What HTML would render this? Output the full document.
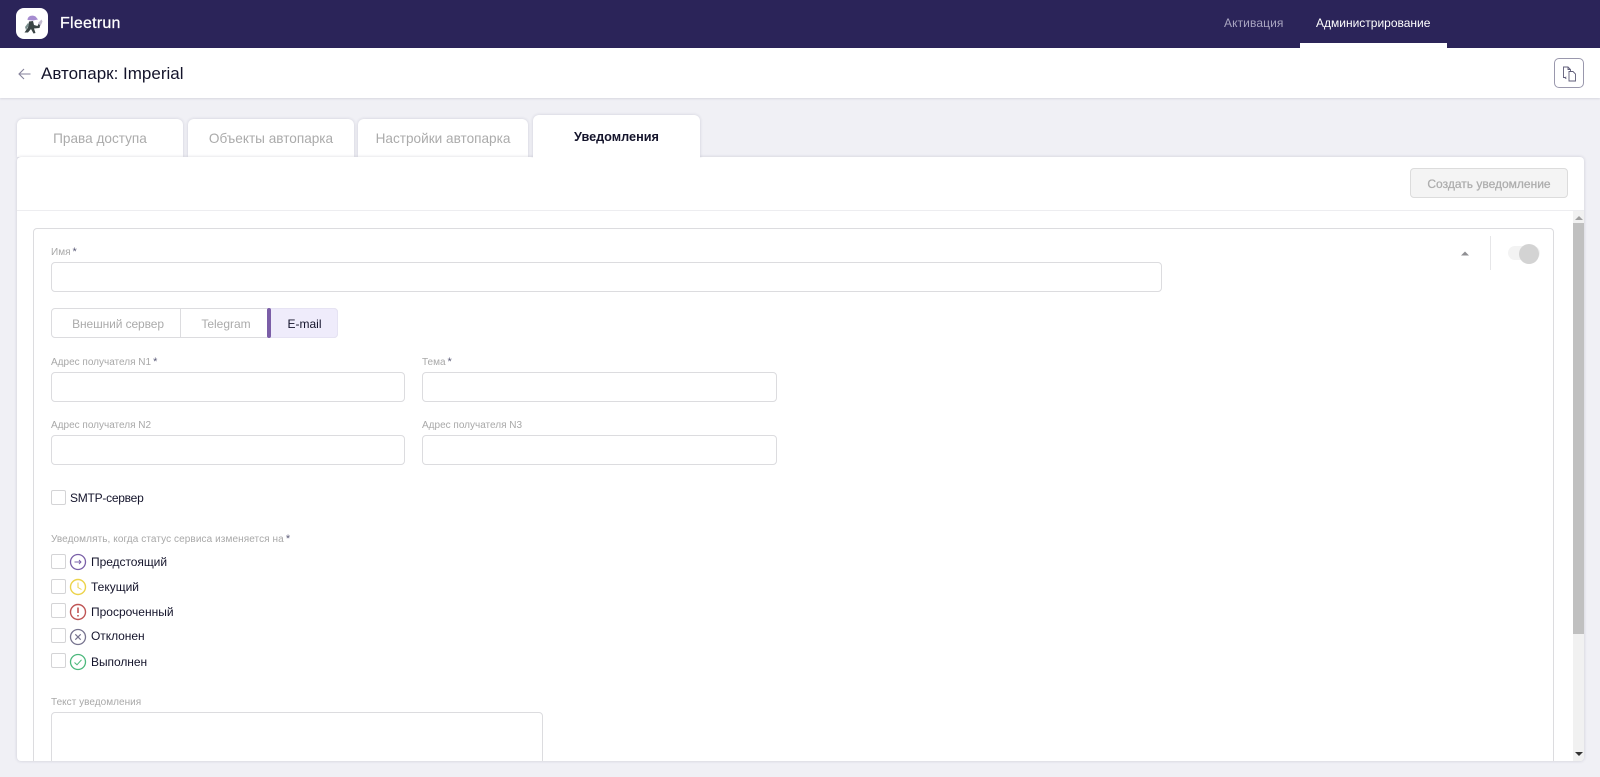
<!DOCTYPE html>
<html lang="ru"><head><meta charset="utf-8"><title>Fleetrun</title>
<style>
html,body{margin:0;padding:0}
body{width:1600px;height:777px;overflow:hidden;background:#f0f0f5;font-family:"Liberation Sans",sans-serif;position:relative;color:#14142b}
.a{position:absolute;box-sizing:border-box}
.t{position:absolute;white-space:nowrap;line-height:16px}
.lb{font-size:10px;color:#a8a8a8;line-height:12px}
.lb b{color:#5b5b78;font-weight:400;font-size:11px;margin-left:2px}
.in{position:absolute;box-sizing:border-box;background:#fff;border:1px solid #dcdcdf;border-radius:4px}
.cb{position:absolute;box-sizing:border-box;width:15px;height:15px;left:51px;background:#fff;border:1.5px solid #d4d4d6;border-radius:2px}
.tab{position:absolute;box-sizing:border-box;background:#fff;border-radius:6px 6px 0 0;box-shadow:0 0 3px rgba(40,40,80,.16);text-align:center;color:#ababab;font-size:13.600px;top:119px;height:38px;line-height:40px}
svg{position:absolute;display:block}
</style></head><body>

<div class="a" style="left:0;top:0;width:1600px;height:48px;background:#2b2459"></div>
<div class="a" style="left:16px;top:8px;width:32px;height:31px;background:#fff;border-radius:8px"></div>
<svg style="left:16px;top:8px" width="32" height="31" viewBox="0 0 32 31">
<path d="M11.500 12C11.500 8 16 6.500 19.500 8.500L22 11.500L17 12.500Z" fill="#a68cd0"/>
<path d="M13 13.500L17 13L18 17L21.500 18L23 15L24.500 16L23.500 20L18 20.500L19.500 25L17.500 25.500L15 21L12 24.500L8.500 24.500L12 19.500Z" fill="#3a4545"/>
<path d="M22 15L25.500 11.500L26.500 13.500L24.500 18Z" fill="#c3bccf"/>
<path d="M9 19L12 15L13 17L10 22Z" fill="#7a8f8d"/>
</svg>
<div class="t" style="left:60px;top:15px;font-size:16px;line-height:18px;color:#fff;letter-spacing:.25px;-webkit-text-stroke:.25px #fff">Fleetrun</div>
<div class="t" style="left:1224px;top:15px;font-size:12px;color:#a9a5c0;letter-spacing:.1px">Активация</div>
<div class="a" style="left:1300px;top:43px;width:147px;height:5px;background:#fff"></div>
<div class="t" style="left:1316px;top:15px;font-size:12px;color:#fff;letter-spacing:0">Администрирование</div>

<div class="a" style="left:0;top:48px;width:1600px;height:50px;background:#fff;box-shadow:0 1px 2px rgba(40,40,80,.12)"></div>
<svg style="left:17px;top:66px" width="15" height="16" viewBox="0 0 15 16" fill="none" stroke="#85829b" stroke-width="1.100"><path d="M13.500 8H2M7 3L2 8l5 5"/></svg>
<div class="t" style="left:41px;top:63px;font-size:17px;line-height:21px;color:#14142b">Автопарк: Imperial</div>
<div class="a" style="left:1554px;top:58px;width:30px;height:30px;border:1px solid #9a98ad;border-radius:5px;background:#fff"></div>
<svg style="left:1562px;top:66px" width="17" height="16" viewBox="0 0 17 16" fill="none" stroke="#5f5c78" stroke-width=".9"><path d="M3.500 11.500H1.500V1H6L8.500 3.500V5"/><path d="M6 1V3.500H8.500"/><path d="M7 5.500H11L13.500 8V15H7Z"/><path d="M3 11.800l1.300-1M3 11.800l1.300 1"/></svg>

<div class="tab" style="left:17px;width:166px">Права доступа</div>
<div class="tab" style="left:188px;width:166px">Объекты автопарка</div>
<div class="tab" style="left:358px;width:170px">Настройки автопарка</div>
<div class="tab" style="left:533px;width:167px;top:115px;height:43px;line-height:45px;color:#14142b;font-size:12.700px;font-weight:700;z-index:3;clip-path:inset(-4px -4px 0 -4px)">Уведомления</div>

<div class="a" style="left:17px;top:157px;width:1567px;height:604px;background:#fff;border-radius:4px;box-shadow:0 0 3px rgba(40,40,80,.18);overflow:hidden;z-index:2">
<div class="a" style="left:0;top:53px;width:1567px;height:1px;background:#ededf0"></div>
<div class="a" style="left:1393px;top:11px;width:158px;height:30px;background:#f4f4f4;border:1px solid #dcdcdc;border-radius:4px;text-align:center;line-height:30px;font-size:12px;-webkit-text-stroke:.25px #adadad;color:#adadad">Создать уведомление</div>
<div class="a" style="left:1556px;top:54px;width:11px;height:550px;background:#f1f1f1"></div>
<div class="a" style="left:1556px;top:66px;width:11px;height:411px;background:#c0c0c0"></div>
<svg style="left:1558px;top:58px" width="8" height="5" viewBox="0 0 8 5"><path d="M0 5L4 1L8 5Z" fill="#a0a0a0"/></svg>
<svg style="left:1558px;top:595px" width="8" height="5" viewBox="0 0 8 5"><path d="M0 0L4 4L8 0Z" fill="#333"/></svg>
<div class="a" style="left:16px;top:71px;width:1521px;height:560px;border:1px solid #dcdcdf;border-radius:4px"></div>
</div>

<div style="position:absolute;left:0;top:0;z-index:4;width:1600px;height:761px;overflow:hidden">
<svg style="left:1460px;top:250px" width="10" height="6" viewBox="0 0 10 6"><path d="M1 5.500L5 1.500L9 5.500Z" fill="#8f8f93"/></svg>
<div class="a" style="left:1490px;top:236px;width:1px;height:34px;background:#e6e6e8"></div>
<div class="a" style="left:1508px;top:246px;width:32px;height:14px;background:#f3f3f3;border-radius:7px"></div>
<div class="a" style="left:1519px;top:244px;width:20px;height:20px;background:#d3d3d3;border-radius:50%"></div>

<div class="t lb" style="left:51px;top:246px">Имя<b>*</b></div>
<div class="in" style="left:51px;top:262px;width:1111px;height:30px"></div>

<div class="a" style="left:51px;top:308px;width:287px;height:30px;background:#fff;border:1px solid #dcdcdf;border-radius:4px"></div>
<div class="a" style="left:180px;top:308px;width:1px;height:30px;background:#dcdcdf"></div>
<div class="a" style="left:267px;top:308px;width:71px;height:30px;background:#efecfb;border:1px solid #e6e3f3;border-radius:0 4px 4px 0"></div>
<div class="a" style="left:267px;top:308px;width:4px;height:30px;background:#7b5ea7;border-radius:2px"></div>
<div class="t" style="left:54px;top:316px;width:128px;text-align:center;font-size:12px;letter-spacing:-.1px;color:#ababab">Внешний сервер</div>
<div class="t" style="left:183px;top:316px;width:86px;text-align:center;font-size:12px;color:#ababab">Telegram</div>
<div class="t" style="left:271.500px;top:316px;width:66px;text-align:center;font-size:12px;color:#14142b">E-mail</div>

<div class="t lb" style="left:51px;top:356px">Адрес получателя N1<b>*</b></div>
<div class="in" style="left:51px;top:372px;width:354px;height:30px"></div>
<div class="t lb" style="left:422px;top:356px">Тема<b>*</b></div>
<div class="in" style="left:422px;top:372px;width:355px;height:30px"></div>
<div class="t lb" style="left:51px;top:419.500px">Адрес получателя N2</div>
<div class="in" style="left:51px;top:435px;width:354px;height:30px"></div>
<div class="t lb" style="left:422px;top:419.500px">Адрес получателя N3</div>
<div class="in" style="left:422px;top:435px;width:355px;height:30px"></div>

<div class="cb" style="top:490px"></div>
<div class="t" style="left:70px;top:490px;font-size:12px;letter-spacing:-.25px;color:#14142b">SMTP-сервер</div>

<div class="t lb" style="left:51px;top:533px;letter-spacing:.09px">Уведомлять, когда статус сервиса изменяется на<b>*</b></div>

<div class="cb" style="top:553.500px"></div>
<svg style="left:69px;top:553px" width="18" height="18" viewBox="0 0 18 18" fill="none" stroke="#7a60a8" stroke-width="1.300"><circle cx="9" cy="9" r="7.500"/><path d="M5.500 9H12M10 7L12 9L10 11" stroke-width=".9"/></svg>
<div class="t" style="left:91px;top:554px;font-size:12px;letter-spacing:-.05px">Предстоящий</div>

<div class="cb" style="top:578.500px"></div>
<svg style="left:69px;top:577.500px" width="18" height="18" viewBox="0 0 18 18" fill="none" stroke="#ecd34a" stroke-width="1.400"><circle cx="9" cy="9" r="7.500"/><path d="M9 4.500V9.500L12.500 11.500" stroke-width="1"/></svg>
<div class="t" style="left:91px;top:579px;font-size:12px">Текущий</div>

<div class="cb" style="top:603px"></div>
<svg style="left:69px;top:603px" width="18" height="18" viewBox="0 0 18 18" fill="none" stroke="#bf5555" stroke-width="1.400"><circle cx="9" cy="9" r="7.500"/><path d="M9 4.500V10M9 12V13.500" stroke-width="1.600"/></svg>
<div class="t" style="left:91px;top:604px;font-size:12px">Просроченный</div>

<div class="cb" style="top:628px"></div>
<svg style="left:69px;top:627.500px" width="18" height="18" viewBox="0 0 18 18" fill="none" stroke="#77748f" stroke-width="1.300"><circle cx="9" cy="9" r="7.500"/><path d="M6.300 6.300L11.700 11.700M11.700 6.300L6.300 11.700" stroke-width="1.200"/></svg>
<div class="t" style="left:91px;top:628px;font-size:12px;letter-spacing:-.05px">Отклонен</div>

<div class="cb" style="top:653px"></div>
<svg style="left:69px;top:652.500px" width="18" height="18" viewBox="0 0 18 18" fill="none" stroke="#4cb87c" stroke-width="1.300"><circle cx="9" cy="9" r="7.500"/><path d="M5.500 9.500L8 11.800L12.500 6.800" stroke-width="1"/></svg>
<div class="t" style="left:91px;top:653.500px;font-size:12px;letter-spacing:-.05px">Выполнен</div>

<div class="t lb" style="left:51px;top:697px;letter-spacing:.03px">Текст уведомления</div>
<div class="in" style="left:51px;top:712px;width:492px;height:70px"></div>
</div>
</body></html>
